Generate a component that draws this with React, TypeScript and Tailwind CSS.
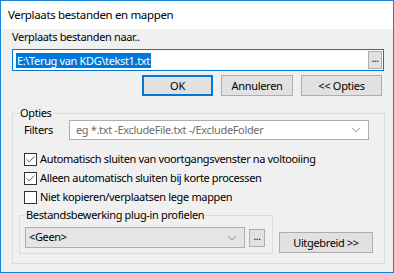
import { Check, ChevronDown } from 'lucide-react';

const font = { fontFamily: '"Noto Sans", "Liberation Sans", sans-serif' };

const Btn = ({ label, w, primary }: { label: string; w: string; primary?: boolean }) => (
  <button
    type="button"
    className={`${w} h-[21px] bg-[#e1e1e1] text-[11px] tracking-[-0.3px] leading-none text-black ${
      primary ? 'border-2 border-[#0078d7]' : 'border border-[#adadad]'
    }`}
  >
    {label}
  </button>
);

const CheckRow = ({ label, checked }: { label: string; checked?: boolean }) => (
  <div className="flex items-center h-[19px]">
    <span className="w-[13px] h-[13px] border border-[#333333] bg-white flex items-center justify-center">
      {checked && <Check size={11} strokeWidth={1.6} className="text-[#222]" />}
    </span>
    <span className="ml-[3px]">{label}</span>
  </div>
);

export default function App() {
  return (
    <div
      className="w-[394px] h-[273px] border border-[#1883d7] bg-[#f0f0f0] flex flex-col text-black text-[11px] tracking-[-0.35px]"
      style={font}
    >
      {/* titel */}
      <div className="h-[28px] bg-white pl-[7px] flex items-center text-[11.5px]">
        Verplaats bestanden en mappen
      </div>

      <div className="flex-1 px-[10px]">
        <div className="pl-[1px] h-[14px] leading-[14px] mt-[1px]">Verplaats bestanden naar..</div>

        {/* doel */}
        <div className="mt-[5px] ml-[1px] h-[22px] w-[372px] border border-[#0078d7] bg-white flex items-center pl-[3px] pr-[1px]">
          <span className="bg-[#0078d7] text-white leading-[15px] px-[1px]">
            E:\Terug van KDG\tekst1.txt
          </span>
          <div className="flex-1" />
          <button
            type="button"
            className="w-[14px] h-[18px] border border-[#adadad] bg-[#e1e1e1] text-[10px] leading-none pb-[4px]"
          >
            ...
          </button>
        </div>

        {/* knoppen */}
        <div className="mt-[4px] flex justify-end gap-[8px] pr-[1px]">
          <Btn label="OK" w="w-[71px]" primary />
          <Btn label="Annuleren" w="w-[72px]" />
          <Btn label="<< Opties" w="w-[81px]" />
        </div>

        {/* opties */}
        <fieldset className="mt-[10px] ml-[1px] w-[372px] h-[158px] border border-[#dcdcdc] px-[11px]">
          <legend className="px-[1px] ml-[-5px] leading-[14px]">Opties</legend>

          <div className="flex items-center">
            <span className="w-[45px]">Filters</span>
            <div className="w-[300px] h-[20px] border border-[#adadad] bg-white flex items-center pl-[6px] pr-[5px]">
              <span className="flex-1 text-[#6d6d6d] whitespace-nowrap overflow-hidden">
                eg *.txt -ExcludeFile.txt -/ExcludeFolder
              </span>
              <ChevronDown size={14} strokeWidth={1.2} className="text-[#555]" />
            </div>
          </div>

          <div className="mt-[10px]">
            <CheckRow label="Automatisch sluiten van voortgangsvenster na voltooiing" checked />
            <CheckRow label="Alleen automatisch sluiten bij korte processen" checked />
            <CheckRow label="Niet kopieren/verplaatsen lege mappen" />
          </div>

          <div className="flex items-end mt-[1px]">
            <fieldset className="ml-[-5px] w-[254px] h-[46px] border border-[#dcdcdc] px-[5px]">
              <legend className="px-[1px] leading-[14px]">
                Bestandsbewerking plug-in profielen
              </legend>
              <div className="flex items-center gap-[4px] mt-[5px]">
                <div className="w-[220px] h-[21px] border border-[#acacac] bg-[#e5e5e5] flex items-center pl-[3px] pr-[5px]">
                  <span className="flex-1">&lt;Geen&gt;</span>
                  <ChevronDown size={14} strokeWidth={1.2} className="text-[#555]" />
                </div>
                <button
                  type="button"
                  className="w-[16px] h-[18px] border border-[#adadad] bg-[#e1e1e1] text-[10px] leading-none pb-[4px]"
                >
                  ...
                </button>
              </div>
            </fieldset>
            <button
              type="button"
              className="ml-[6px] mb-[1px] w-[94px] h-[21px] border border-[#adadad] bg-[#e1e1e1] leading-none"
            >
              Uitgebreid &gt;&gt;
            </button>
          </div>
        </fieldset>
      </div>
    </div>
  );
}
